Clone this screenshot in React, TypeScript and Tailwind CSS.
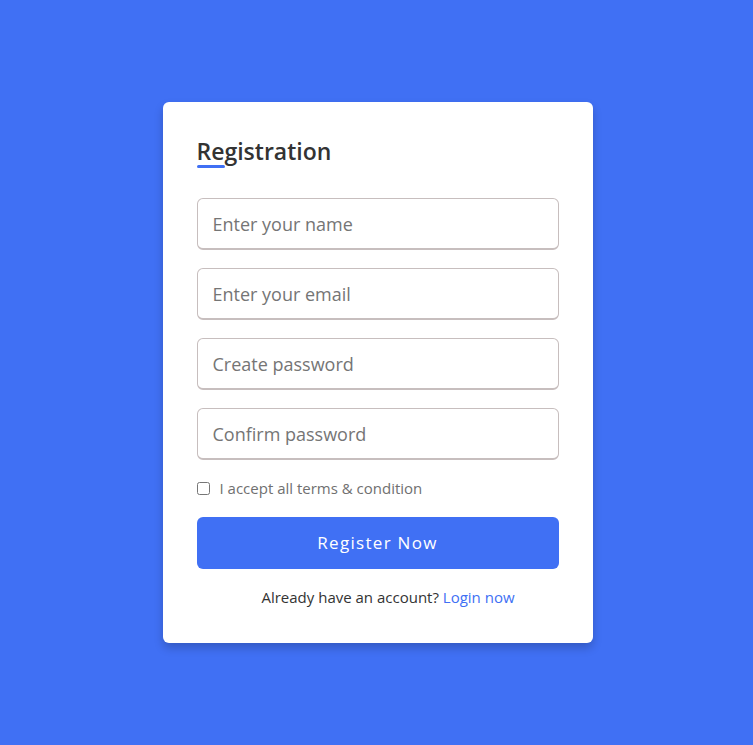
import React from 'react';

const font = { fontFamily: '"Open Sans", "Liberation Sans", sans-serif' };

const inputClass =
  "h-[52px] w-full rounded-[6px] border-[1.5px] border-b-[2.5px] border-[#C7BEBE] bg-white px-[15px] text-[18px] text-[#707070] outline-none placeholder:text-[#757575] focus:border-[#4070f4]";

export default function App() {
  return (
    <div
      className="flex min-h-screen items-center justify-center bg-[#4070f4] pl-[2px]"
      style={font}
    >
      <div className="w-[430px] rounded-[6px] bg-white px-[34px] pt-[32px] pb-[35px] shadow-[0_5px_10px_rgba(0,0,0,0.2)]">
        {/* Title */}
        <h2 className="relative text-[23px] font-semibold leading-[34px] text-[#333]">
          Registration
          <span className="absolute bottom-0 left-0 h-[3px] w-[28px] rounded-[12px] bg-[#4070f4]"></span>
        </h2>

        <form className="mt-[30px] flex flex-col gap-[18px]" onSubmit={e => e.preventDefault()}>
          <input type="text" placeholder="Enter your name" className={inputClass} />
          <input type="text" placeholder="Enter your email" className={inputClass} />
          <input type="password" placeholder="Create password" className={inputClass} />
          <input type="password" placeholder="Confirm password" className={inputClass} />

          <label className="flex h-[21px] items-center">
            <input type="checkbox" className="m-0 h-[13px] w-[13px]" />
            <span className="ml-[10px] text-[15px] leading-[21px] text-[#707070]">
              I accept all terms &amp; condition
            </span>
          </label>

          <button
            type="submit"
            className="h-[52px] w-full rounded-[6px] bg-[#4070f4] text-[17px] font-medium tracking-[1.3px] text-white"
          >
            Register Now
          </button>

          <p className="pl-[21px] text-center text-[15px] font-medium leading-[21px] text-[#333]">
            Already have an account? <a href="#" className="text-[#4070f4]">Login now</a>
          </p>
        </form>
      </div>
    </div>
  );
}
